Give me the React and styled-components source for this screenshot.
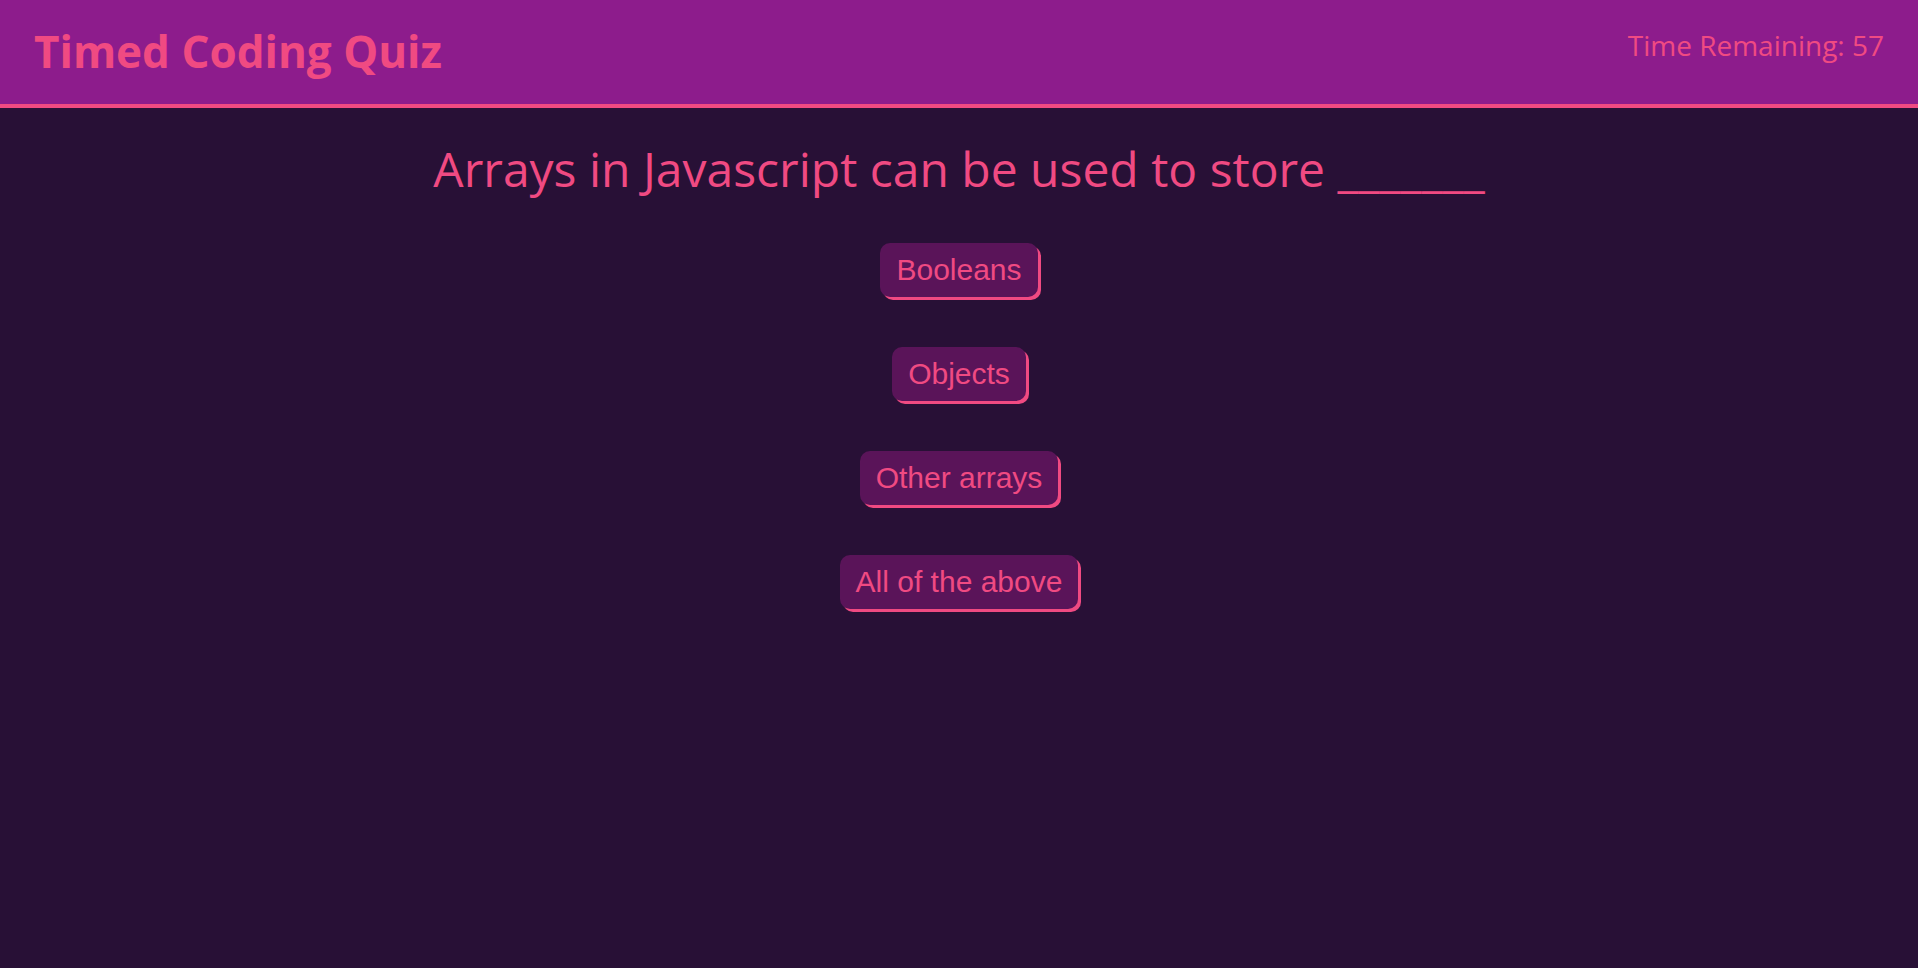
import React from 'react';
import styled, { createGlobalStyle } from 'styled-components';

const GlobalStyle = createGlobalStyle`
  html, body {
    margin: 0;
    padding: 0;
    background-color: #281036;
  }
  body {
    min-height: 100vh;
    font-family: "Open Sans", "Noto Sans", sans-serif;
  }
`;

const Header = styled.header`
  display: flex;
  justify-content: space-between;
  align-items: flex-start;
  height: 104px;
  padding: 0 34px 0 34px;
  background-color: #8d1c8c;
  border-bottom: 4px solid #f04a82;
  box-sizing: content-box;
`;

const Title = styled.h1`
  margin: 0;
  padding-top: 25px;
  font-size: 44px;
  font-weight: 700;
  color: #f04a82;
  line-height: 1.2;
`;

const Timer = styled.div`
  padding-top: 29px;
  font-size: 28px;
  color: #f04a82;
  line-height: 1.2;
`;

const Main = styled.main`
  display: flex;
  flex-direction: column;
  align-items: center;
`;

const Question = styled.h2`
  margin: 32px 0 45px;
  font-size: 48px;
  font-weight: 400;
  color: #f04a82;
  line-height: 1.2;
`;

const Choices = styled.div`
  display: flex;
  flex-direction: column;
  align-items: center;
  gap: 50px;
`;

const Choice = styled.button`
  padding: 10px 16px;
  border: none;
  border-radius: 10px;
  background-color: #5a1459;
  box-shadow: 3px 3px 0 #f04a82;
  color: #f04a82;
  font-family: "Liberation Sans", Arial, sans-serif;
  font-size: 30px;
  line-height: 34px;
  cursor: pointer;
`;

const choices = ['Booleans', 'Objects', 'Other arrays', 'All of the above'];

export default function App() {
  return (
    <>
      <GlobalStyle />
      <Header>
        <Title>Timed Coding Quiz</Title>
        <Timer>Time Remaining: 57</Timer>
      </Header>
      <Main>
        <Question>Arrays in Javascript can be used to store _______</Question>
        <Choices>
          {choices.map((c) => (
            <Choice key={c}>{c}</Choice>
          ))}
        </Choices>
      </Main>
    </>
  );
}
